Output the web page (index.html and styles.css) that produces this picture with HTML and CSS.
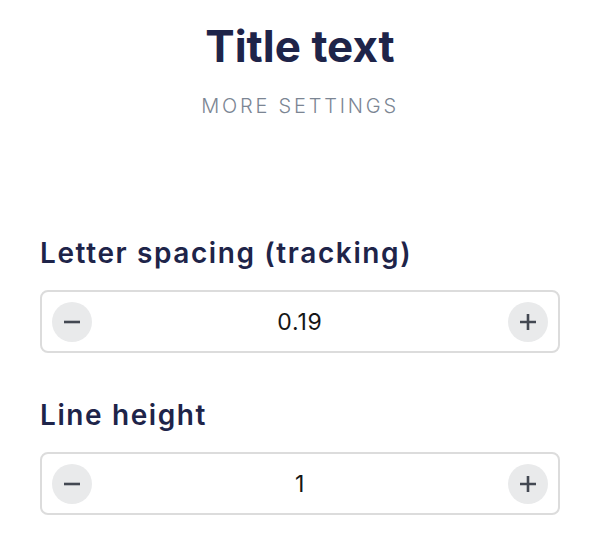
FILE: index.html
```html
<!DOCTYPE html>
<html lang="en">
<head>
    <meta charset="UTF-8">
    <meta name="viewport" content="width=device-width, initial-scale=1.0">
    <title>Title text</title>
    <link rel="stylesheet" href="styles.css">
</head>
<body>
    <div class="panel">
        <header class="panel-header">
            <h1>Title text</h1>
            <p class="subtitle">More settings</p>
        </header>

        <div class="field">
            <label class="field-label">Letter spacing (tracking)</label>
            <div class="stepper">
                <button class="step-button" aria-label="Decrease">
                    <svg width="18" height="18" viewBox="0 0 18 18"><path d="M1 9h16" stroke="currentColor" stroke-width="2.6"/></svg>
                </button>
                <span class="step-value">0.19</span>
                <button class="step-button" aria-label="Increase">
                    <svg width="18" height="18" viewBox="0 0 18 18"><path d="M1 9h16M9 1v16" stroke="currentColor" stroke-width="2.6"/></svg>
                </button>
            </div>
        </div>

        <div class="field">
            <label class="field-label">Line height</label>
            <div class="stepper">
                <button class="step-button" aria-label="Decrease">
                    <svg width="18" height="18" viewBox="0 0 18 18"><path d="M1 9h16" stroke="currentColor" stroke-width="2.6"/></svg>
                </button>
                <span class="step-value">1</span>
                <button class="step-button" aria-label="Increase">
                    <svg width="18" height="18" viewBox="0 0 18 18"><path d="M1 9h16M9 1v16" stroke="currentColor" stroke-width="2.6"/></svg>
                </button>
            </div>
        </div>
    </div>
</body>
</html>
```

FILE: styles.css
```css
:root {
    --navy: #1e2449;
    --muted: #7b8593;
    --border: #dcdcdc;
    --button-bg: #e9eaeb;
    --icon: #434852;
}

* {
    box-sizing: border-box;
    margin: 0;
    padding: 0;
}

body {
    background: #ffffff;
    font-family: 'Inter', sans-serif;
    color: var(--navy);
}

.panel {
    padding: 20px 44px 0 40px;
}

.panel-header {
    text-align: center;
    margin-bottom: 118px;
}

.panel-header h1 {
    font-size: 44px;
    font-weight: 700;
    line-height: 52px;
}

.subtitle {
    margin-top: 22px;
    font-size: 20px;
    font-weight: 300;
    line-height: 24px;
    letter-spacing: 2.8px;
    text-transform: uppercase;
    color: var(--muted);
}

.field {
    margin-bottom: 45px;
}

.field-label {
    display: block;
    font-size: 28px;
    font-weight: 600;
    line-height: 34px;
    letter-spacing: 1.6px;
    margin-bottom: 20px;
}

.stepper {
    display: flex;
    align-items: center;
    justify-content: space-between;
    height: 63px;
    padding: 0 10px;
    border: 2px solid var(--border);
    border-radius: 8px;
}

.step-button {
    display: flex;
    align-items: center;
    justify-content: center;
    width: 40px;
    height: 40px;
    border: none;
    border-radius: 50%;
    background: var(--button-bg);
    color: var(--icon);
    cursor: pointer;
}

.step-value {
    font-size: 23px;
    letter-spacing: 0.8px;
    color: #161616;
}
```
